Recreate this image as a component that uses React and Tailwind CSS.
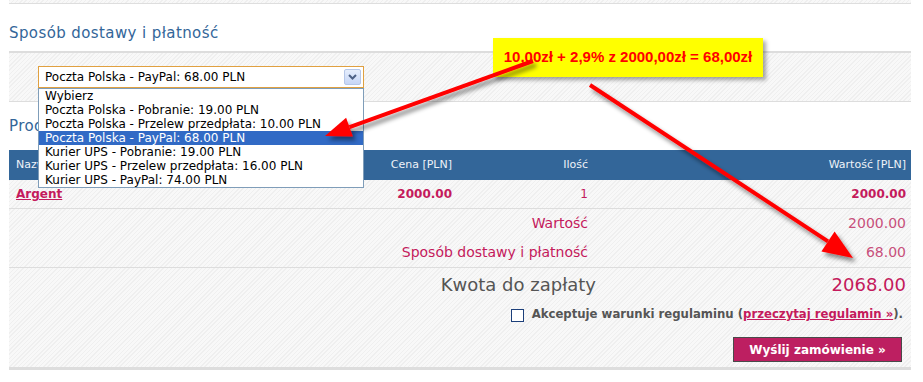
import React from "react";

const hatch =
  "bg-[repeating-linear-gradient(135deg,#efefef_0px,#efefef_1px,#f8f8f8_1px,#f8f8f8_3px)]";

function Arrows() {
  return (
    <svg className="absolute left-0 top-0 pointer-events-none z-30" width="923" height="382" viewBox="0 0 923 382">
      <defs>
        <filter id="sh" x="-20%" y="-20%" width="140%" height="140%">
          <feDropShadow dx="3" dy="4" stdDeviation="2" floodColor="#000" floodOpacity="0.45" />
        </filter>
      </defs>
      <g filter="url(#sh)">
        <line x1="533" y1="61" x2="349.5" y2="127.2" stroke="#f00" strokeWidth="4" />
        <polygon points="325,136 346.1,117.8 352.9,136.6" fill="#f00" />
        <line x1="590" y1="85" x2="828" y2="241.4" stroke="#f00" strokeWidth="4" />
        <polygon points="853,258 821.4,251.4 834.6,231.4" fill="#f00" />
      </g>
    </svg>
  );
}

export default function App() {
  const verd = "font-['DejaVu_Sans',Verdana,sans-serif]";
  const pink = "text-[#c41a5c]";
  return (
    <div className={`relative w-[923px] h-[382px] bg-white overflow-hidden ${verd}`}>
      <div className="ml-[9px] w-[902px] flex flex-col">
        {/* top strip */}
        <div className={`h-[4px] ${hatch} border-b border-[#dedede]`} />
        {/* heading */}
        <div className="h-[47px] flex items-center pt-[12px]">
          <h2 className="text-[15px] tracking-[0.4px] text-[#336699] leading-none">Sposób dostawy i płatność</h2>
        </div>
        {/* select band */}
        <div className={`h-[51px] border-t-2 border-b border-[#dddddd] ${hatch} relative`}>
          <div className="absolute left-[29px] top-[13px] w-[326px] z-10">
            <div className="h-[22px] border border-[#e0a040] bg-white flex items-center pl-[6px] pr-[2px] text-[12px] text-black">
              <span className="flex-1">Poczta Polska - PayPal: 68.00 PLN</span>
              <span className="w-[17px] h-[16px] border border-[#b6c7e8] rounded-[2px] bg-[linear-gradient(#e6eefc,#c6d6f7)] flex items-center justify-center">
                <svg width="9" height="6" viewBox="0 0 9 6">
                  <path d="M1 1 L4.5 4.5 L8 1" stroke="#4d6185" strokeWidth="2" fill="none" />
                </svg>
              </span>
            </div>
            <div className="border border-[#7f9db9] bg-white text-[12px] leading-[14px] text-black">
              <div className="pl-[6px]">Wybierz</div>
              <div className="pl-[6px]">Poczta Polska - Pobranie: 19.00 PLN</div>
              <div className="pl-[6px]">Poczta Polska - Przelew przedpłata: 10.00 PLN</div>
              <div className="pl-[6px] bg-[#316ac5] text-white">Poczta Polska - PayPal: 68.00 PLN</div>
              <div className="pl-[6px]">Kurier UPS - Pobranie: 19.00 PLN</div>
              <div className="pl-[6px]">Kurier UPS - Przelew przedpłata: 16.00 PLN</div>
              <div className="pl-[6px]">Kurier UPS - PayPal: 74.00 PLN</div>
            </div>
          </div>
        </div>
        {/* products heading */}
        <div className="h-[48px] flex items-center">
          <h2 className="text-[15px] tracking-[0.4px] text-[#336699] leading-none">Produkty</h2>
        </div>
        {/* table header */}
        <div className="h-[30px] bg-[#336699] text-[#eef2f8] text-[11px] grid grid-cols-[340px_108px_136px_318px] items-center">
          <div className="pl-[7px]">Nazwa</div>
          <div className="text-right pr-[5px]">Cena [PLN]</div>
          <div className="text-right pr-[5px]">Ilość</div>
          <div className="text-right pr-[5px]">Wartość [PLN]</div>
        </div>
        <div className={`${hatch} flex flex-col`}>
          {/* product row */}
          <div className={`h-[29px] border-b border-[#dddddd] grid grid-cols-[340px_108px_136px_318px] items-center text-[12px] ${pink}`}>
            <div className="pl-[7px] font-bold underline">Argent</div>
            <div className="text-right pr-[5px] font-bold">2000.00</div>
            <div className="text-right pr-[5px]">1</div>
            <div className="text-right pr-[5px] font-bold">2000.00</div>
          </div>
          {/* summary */}
          <div className={`h-[59px] border-b border-[#dddddd] grid grid-cols-[584px_318px] content-center gap-y-[12px] text-[14px] leading-[17px] ${pink}`}>
            <div className="text-right pr-[5px]">Wartość</div>
            <div className="text-right pr-[5px] text-[#c8507c]">2000.00</div>
            <div className="text-right pr-[5px]">Sposób dostawy i płatność</div>
            <div className="text-right pr-[5px] text-[#c8507c]">68.00</div>
          </div>
          {/* total */}
          <div className="h-[32px] grid grid-cols-[587px_315px] items-center text-[18px]">
            <div className="text-right text-[#555555]">Kwota do zapłaty</div>
            <div className={`text-right pr-[5px] ${pink}`}>2068.00</div>
          </div>
          {/* terms */}
          <div className="h-[30px] flex items-center justify-end pr-[8px] text-[11.7px] font-bold text-[#555555]">
            <span className="w-[13px] h-[13px] border border-[#1c3f7a] bg-white mr-[8px]" />
            <span>
              Akceptuje warunki regulaminu (
              <span className={`${pink} underline`}>przeczytaj regulamin »</span>
              ).
            </span>
          </div>
          {/* button */}
          <div className="h-[37px] flex justify-end items-start pt-[7px] pr-[9px]">
            <button className="h-[25px] w-[169px] bg-[#bd1f61] border border-[#4a4a4a] text-white text-[12px] font-bold flex items-center justify-center">
              Wyślij zamówienie »
            </button>
          </div>
          <div className="h-[3px] bg-[#dddddd]" />
        </div>
      </div>
      {/* annotation */}
      <div className="absolute z-20 left-[493px] top-[38px] w-[270px] h-[39px] bg-[#ffff00] shadow-[3px_3px_4px_rgba(0,0,0,0.35)] flex items-center justify-center font-['Liberation_Sans',Arial,sans-serif] font-bold text-[15px] text-[#ff0000]">
        10,00zł + 2,9% z 2000,00zł = 68,00zł
      </div>
      <Arrows />
    </div>
  );
}
